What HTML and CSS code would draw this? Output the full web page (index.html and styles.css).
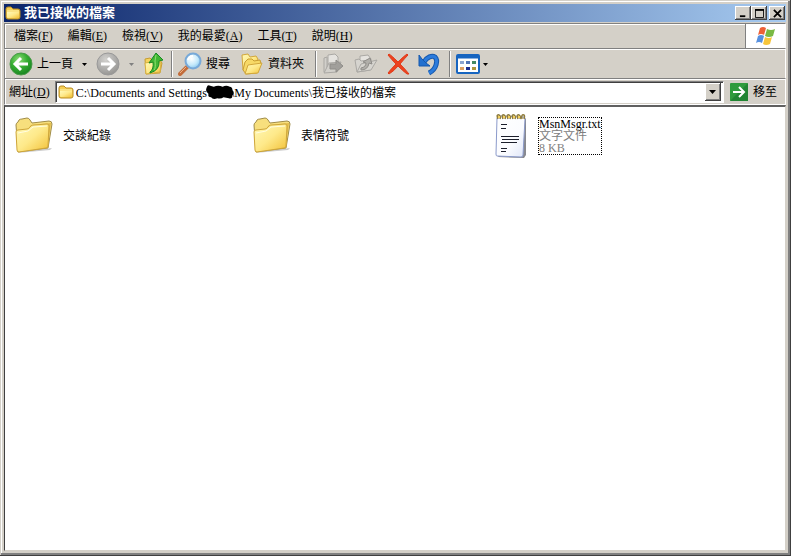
FILE: index.html
```html
<!DOCTYPE html>
<html lang="zh-Hant">
<head>
<meta charset="utf-8">
<title>我已接收的檔案</title>
<link rel="stylesheet" href="styles.css">
</head>
<body>
<svg class="defs" aria-hidden="true">
  <defs>
    <linearGradient id="gold" x1="0" y1="0" x2="1" y2="1"><stop offset="0" stop-color="#fff9b8"/><stop offset=".5" stop-color="#fee98a"/><stop offset="1" stop-color="#f2c035"/></linearGradient>
    <radialGradient id="green" cx=".4" cy=".3" r=".75"><stop offset="0" stop-color="#8fdc78"/><stop offset=".5" stop-color="#35ad32"/><stop offset="1" stop-color="#158020"/></radialGradient>
    <radialGradient id="grey" cx=".4" cy=".3" r=".75"><stop offset="0" stop-color="#d2d1ce"/><stop offset=".6" stop-color="#adacaa"/><stop offset="1" stop-color="#93928f"/></radialGradient>
    <radialGradient id="lens" cx=".4" cy=".35" r=".7"><stop offset="0" stop-color="#fff"/><stop offset=".6" stop-color="#c4e9fb"/><stop offset="1" stop-color="#80c3ee"/></radialGradient>
    <linearGradient id="page" x1="0" y1="0" x2="1" y2="1"><stop offset="0" stop-color="#fff"/><stop offset=".6" stop-color="#fbfcff"/><stop offset="1" stop-color="#dfe6f8"/></linearGradient>
    <symbol id="folder" viewBox="0 0 40 40">
      <path d="M3 37 36 34 38 32 14 35Z" fill="#999" opacity=".5"/>
      <path d="M2 9Q2 7 4 6L5 4Q6 3 8 3L13 2Q15 2 16 4L18 7 35 5Q38 5 38 8L34 32 4 36Z" fill="#f7df7d" stroke="#a08c48"/>
      <path d="M5 15 13 14 17 9 37 7 34 31 5 35Z" fill="#e3bc4a"/>
      <path d="M2 16Q2 14 4 14L13 13Q15 13 16 11L17 10Q18 9 20 9L33 8Q35 8 35 10L34 30Q34 32 32 32L5 36Q3 36 3 34Z" fill="url(#gold)" stroke="#cfa63a"/>
      <path d="M4 17 14 15 19 11 33 10" fill="none" stroke="#fffde0"/>
    </symbol>
    <symbol id="small-folder" viewBox="0 0 16 14">
      <path d="M1 3Q1 1 3 1H6L8 3H13Q15 3 15 5V11Q15 13 13 13H3Q1 13 1 11Z" fill="#f6cf54" stroke="#b98c22"/>
      <path d="M2 6H14V11Q14 12 13 12H3Q2 12 2 11Z" fill="url(#gold)"/>
      <path d="M2 5H14" stroke="#fff7b5"/>
    </symbol>
  </defs>
</svg>
<main class="window">
  <header class="titlebar">
    <svg class="small-icon"><use href="#small-folder"/></svg>
    <h1>我已接收的檔案</h1>
    <div class="caption-buttons">
      <button aria-label="最小化"><svg viewBox="0 0 10 10"><path d="M1 8H7" stroke="#000" stroke-width="2"/></svg></button>
      <button aria-label="最大化"><svg viewBox="0 0 10 10"><path d="M.5 1V9.5H9.5V1M0 1H10" fill="none" stroke="#000"/><path d="M0 1H10" stroke="#000" stroke-width="2"/></svg></button>
      <button class="close" aria-label="關閉"><svg viewBox="0 0 10 10"><path d="M1 1 9 9M9 1 1 9" stroke="#000" stroke-width="2"/></svg></button>
    </div>
  </header>

  <nav class="menubar" aria-label="功能表">
    <div class="menus">
      <button>檔案(<u>F</u>)</button>
      <button>編輯(<u>E</u>)</button>
      <button>檢視(<u>V</u>)</button>
      <button>我的最愛(<u>A</u>)</button>
      <button>工具(<u>T</u>)</button>
      <button>說明(<u>H</u>)</button>
    </div>
    <div class="brand">
      <svg viewBox="0 0 20 20" aria-hidden="true">
        <path d="M4 2Q7 0 10 2L8 9Q5 7 2 9Z" fill="#ed6137"/>
        <path d="M11 3Q15 5 19 3L17 10Q13 12 9 10Z" fill="#79b943"/>
        <path d="M2 10Q5 8 8 10L6 17Q3 15 0 17Z" fill="#5790df"/>
        <path d="M9 11Q13 13 16 11L14 18Q10 20 7 18Z" fill="#f7c53b"/>
      </svg>
    </div>
  </nav>

  <div class="toolbar" role="toolbar" aria-label="標準按鈕">
    <button class="tool back">
      <svg viewBox="0 0 24 24"><circle cx="12" cy="12" r="11" fill="url(#green)" stroke="#4a9a49"/><path d="M19 12H7M12 6 6 12 12 18" fill="none" stroke="#fff" stroke-width="3"/></svg>
      <span>上一頁</span>
    </button>
    <button class="drop" aria-label="上一頁清單"><svg viewBox="0 0 5 3"><path d="M0 0H5L2.500 3Z"/></svg></button>
    <button class="tool forward" aria-label="下一頁">
      <svg viewBox="0 0 24 24"><circle cx="12" cy="12" r="11" fill="url(#grey)" stroke="#999"/><path d="M5 12H17M12 6 18 12 12 18" fill="none" stroke="#fff" stroke-width="3"/></svg>
    </button>
    <button class="drop dim" aria-label="下一頁清單"><svg viewBox="0 0 5 3"><path d="M0 0H5L2.500 3Z"/></svg></button>
    <button class="tool up" aria-label="上一層">
      <svg viewBox="0 0 22 24"><path d="M2 7 7 6 9 8 17 8 19 11 17 21 3 22Z" fill="#f5d45e" stroke="#c79d31"/><path d="M2 11 8 10 18 11 17 20 3 22Z" fill="url(#gold)" stroke="#d7af40"/><path d="M7 20Q11 17 10 10L6 11 13 1 20 8 16 9Q17 18 7 21Z" fill="#41b634" stroke="#168a22"/><path d="M13 3 12 9Q13 16 11 18" stroke="#8ee06f" fill="none"/></svg>
    </button>
    <span class="divider"></span>
    <button class="tool search">
      <svg viewBox="0 0 24 24"><path d="M2 22 9 15" stroke="#c26d3c" stroke-width="4" stroke-linecap="round"/><path d="M2 21 8 15" stroke="#efb184" stroke-width="1"/><circle cx="15" cy="9" r="7.500" fill="url(#lens)" stroke="#78a9d8" stroke-width="2"/><path d="M10 8Q11 4 15 4" stroke="#fff" stroke-width="2" fill="none"/></svg>
      <span>搜尋</span>
    </button>
    <button class="tool folders">
      <svg viewBox="0 0 24 24"><path d="M2 3 8 2 10 5 16 4 18 7 15 17 3 18Z" fill="url(#gold)" stroke="#d2a73b"/><path d="M5 10 8 7 12 7 14 9 20 8 21 12 17 21 6 22 3 18Z" fill="#f7d966" stroke="#c99d31"/><path d="M8 13 22 11 18 21 5 22Z" fill="url(#gold)" stroke="#d2a73b"/></svg>
      <span>資料夾</span>
    </button>
    <span class="divider"></span>
    <button class="tool move" aria-label="移至">
      <svg viewBox="0 0 24 24" fill="#d2d0cb" stroke="#aaa8a4"><path d="M6 3 13 2 16 5V16L6 18Z" fill="#e5e3df"/><path d="M2 6 5 5V20L2 20Z"/><path d="M2 21 7 11 19 10 15 20Z"/><path d="M8 12H14V8L21 14 14 20V17H8Z" fill="#a19f9b" stroke="#8f8d89"/></svg>
    </button>
    <button class="tool copy" aria-label="複製到">
      <svg viewBox="0 0 24 24" fill="#d6d4cf" stroke="#aaa8a4"><path d="M6 4 14 3 17 7V17L6 18Z" fill="#e5e3df"/><path d="M1 8 5 7 7 9 15 8 16 18 3 20Z"/><path d="M3 20 7 12 23 8 17 18Z"/><path d="M7 16Q12 15 12 11L9 10 16 6 18 12 15 11Q14 18 7 18Z" fill="#b0aea9" stroke="#8f8d89"/></svg>
    </button>
    <button class="tool delete" aria-label="刪除">
      <svg viewBox="0 0 24 24"><path d="M3 2Q5 3 12 10Q18 4 21 2L22 3Q19 6 14 12Q19 17 23 22L21 22Q17 19 12 14Q8 19 3 22L2 21Q5 17 10 12Q6 8 2 3Z" fill="#ed421f" stroke="#e03c1a" stroke-width="1"/></svg>
    </button>
    <button class="tool undo" aria-label="復原">
      <svg viewBox="0 0 24 24"><path d="M7 10C10 5 15 3 18 5C21 8 20 17 12 21" fill="none" stroke="#1759ad" stroke-width="5"/><path d="M7 10C10 5 15 3 18 5C21 8 20 17 12 21" fill="none" stroke="#2b7bdc" stroke-width="3"/><path d="M2 3 2 14 13 14 9 11 5 7Z" fill="#2370cf" stroke="#1759ad"/></svg>
    </button>
    <span class="divider"></span>
    <button class="tool view" aria-label="檢視">
      <svg viewBox="0 0 24 20"><rect x="1" y="1" width="22" height="18" rx="1" fill="#fff" stroke="#1765c0" stroke-width="2"/><path d="M1 3H23" stroke="#1765c0" stroke-width="3"/><path d="M4 7H8V10H4Z" fill="#8ba4d0"/><path d="M10 7H14V10H10Z" fill="#5376b7"/><path d="M16 7H20V10H16Z" fill="#448a62"/><path d="M4 13H8V16H4Z" fill="#dda065"/><path d="M10 13H14V16H10Z" fill="#1b2d8e"/><path d="M16 13H20V16H16Z" fill="#ac963d"/></svg>
    </button>
    <button class="drop" aria-label="檢視清單"><svg viewBox="0 0 5 3"><path d="M0 0H5L2.500 3Z"/></svg></button>
  </div>

  <form class="addressbar">
    <label for="address">網址(<u>D</u>)</label>
    <div class="combo">
      <svg class="small-icon"><use href="#small-folder"/></svg>
      <div class="path">
        <input id="address" type="text" value="C:\Documents and Settings&nbsp;&nbsp;&nbsp;&nbsp;&nbsp;&nbsp;&nbsp;&nbsp;\My Documents\我已接收的檔案">
        <svg class="scribble" viewBox="0 0 34 18" aria-hidden="true"><path d="M2 4Q3 0 6 2L10 3Q15 1 20 3Q24 1 28 3Q31 3 31 7Q34 10 31 13Q31 17 27 16L21 15Q18 17 14 16Q9 18 7 15Q3 15 4 11Q0 8 2 4Z"/></svg>
      </div>
      <button type="button" class="combo-arrow" aria-label="位址清單"><svg viewBox="0 0 7 4"><path d="M0 0H7L3.500 4Z"/></svg></button>
    </div>
    <button type="button" class="go">
      <svg viewBox="0 0 18 18"><rect width="18" height="18" rx="1" fill="#2f9b3d"/><path d="M0 18 18 0V18Z" fill="#218533"/><path d="M3 9H14M9 4 14 9 9 14" fill="none" stroke="#fff" stroke-width="2"/></svg>
      <span>移至</span>
    </button>
  </form>

  <section class="content" aria-label="檔案">
    <ul class="files">
      <li><a href="#"><svg class="file-icon"><use href="#folder"/></svg><span class="file-name">交談紀錄</span></a></li>
      <li><a href="#"><svg class="file-icon"><use href="#folder"/></svg><span class="file-name">表情符號</span></a></li>
      <li><a href="#">
        <svg class="file-icon note" viewBox="0 0 34 46">
          <path d="M5 44 31 45 33 42 33 6 31 4Z" fill="#88898f"/>
          <path d="M6 3 31 4 32 6 30 42Q30 44 28 44L4 43Q3 43 3 41L4 5Z" fill="url(#page)" stroke="#8b9acb"/>
          <g shape-rendering="crispEdges" fill="#1c1f2c"><path d="M8 11H14V12H8ZM8 15H13V16H8ZM8 23H26V24H8ZM9 26H26V27H9ZM8 29H24V30H8ZM8 35H14V36H8ZM8 38H13V39H8Z"/></g>
          <g fill="none" stroke="#8f7c3c" stroke-width="1.500"><path d="M5 6Q3 1 6 2Q8 3 7 6M10 6Q8 1 11 2Q13 3 12 6M15 6Q13 1 16 2Q18 3 17 6M20 6Q18 1 21 2Q23 3 22 6M25 6Q23 1 26 2Q28 3 27 6M29 6Q28 1 31 2Q32 3 31 6"/></g>
          <path d="M5 4H7M10 4H12M15 4H17M20 4H22M25 4H27" stroke="#f3cf5c" stroke-width="2"/>
        </svg>
        <span class="file-name focused">MsnMsgr.txt<small>文字文件</small><small>8 KB</small></span>
      </a></li>
    </ul>
  </section>
</main>
</body>
</html>
```
FILE: styles.css
```css
* { box-sizing: border-box; }

body {
  margin: 0;
  background: #d4d0c8;
  color: #000;
  font: 12px/12px "Liberation Serif", "Noto Sans CJK TC", serif;
}

button, input {
  margin: 0;
  padding: 0;
  border: 0;
  background: none;
  color: inherit;
  font: inherit;
}

svg { display: block; flex: none; }
u { text-underline-offset: 1px; }
.defs { position: absolute; width: 0; height: 0; }

.window {
  display: flex;
  flex-direction: column;
  min-height: 100vh;
  padding: 4px 5px 5px 4px;
  box-shadow: inset -1px -1px #404040, inset 1px 1px #d4d0c8, inset -3px -3px #808080, inset 2px 2px #fff;
}

.titlebar {
  display: flex;
  align-items: center;
  gap: 3px;
  height: 18px;
  padding: 0 1px;
  background: linear-gradient(90deg, #0a246a, #a6caf0);
  color: #fff;
}
.titlebar h1 { flex: 1; margin: 0; font-size: 13px; line-height: 18px; }
.small-icon { width: 16px; height: 14px; }
.caption-buttons { display: flex; }
.caption-buttons button {
  display: grid;
  place-items: center;
  width: 16px;
  height: 14px;
  background: #d4d0c8;
  box-shadow: inset -1px -1px #404040, inset 1px 1px #fff, inset -2px -2px #808080;
}
.caption-buttons svg { width: 9px; height: 9px; }
.caption-buttons .close { margin-left: 2px; }

.menubar {
  display: flex;
  height: 26px;
  margin-top: 1px;
  border: 1px solid #808080;
  border-right-color: #fff;
  box-shadow: inset 1px 1px #fff;
}
.menus { display: flex; flex: 1; padding-left: 2px; }
.menus button { padding: 0 8px 0 7px; }
.brand {
  display: grid;
  place-items: center;
  width: 40px;
  border-left: 1px solid #808080;
  background: #fff;
}
.brand svg { width: 20px; height: 20px; }

.toolbar {
  display: flex;
  align-items: center;
  height: 30px;
  padding-left: 4px;
  border: 1px solid #808080;
  border-top-color: #fff;
  border-right-color: #fff;
  box-shadow: inset 1px 0 #fff;
}
.tool { display: flex; align-items: center; gap: 4px; }
.tool svg { width: 24px; height: 24px; }
.drop { display: grid; place-items: center; width: 23px; height: 24px; }
.drop svg { width: 5px; height: 3px; }
.dim { fill: #808080; }
.up { margin-right: 1px; }
.up svg { width: 22px; }
.divider {
  width: 2px;
  height: 26px;
  margin: 0 5px;
  border-left: 1px solid #808080;
  border-right: 1px solid #fff;
}
.folders { margin: 0 6px 0 10px; }
.move, .copy { margin-right: 8px; }
.delete { margin-right: 7px; }
.undo { margin-right: 3px; }
.view svg { height: 20px; }
.view + .drop { width: 10px; }

.addressbar {
  display: flex;
  align-items: center;
  height: 26px;
  padding: 0 8px 0 4px;
  border-left: 1px solid #808080;
  border-right: 1px solid #fff;
  border-bottom: 1px solid #fff;
  box-shadow: inset 1px 1px #fff;
}
.combo {
  display: flex;
  align-items: center;
  flex: 1;
  height: 22px;
  margin: 0 6px 0 5px;
  padding: 2px;
  border: 1px solid #808080;
  border-right-color: #fff;
  border-bottom-color: #fff;
  box-shadow: inset 1px 1px #404040;
  background: #fff;
}
.path { position: relative; flex: 1; margin-left: 2px; }
.path input { display: block; width: 100%; height: 16px; outline: 0; }
.scribble { position: absolute; left: 128px; top: 0; width: 32px; height: 16px; }
.combo-arrow {
  display: grid;
  place-items: center;
  width: 16px;
  height: 18px;
  background: #d4d0c8;
  box-shadow: inset -1px -1px #404040, inset 1px 1px #fff, inset -2px -2px #808080;
}
.combo-arrow svg { width: 7px; height: 4px; }
.go { display: flex; align-items: center; gap: 5px; }
.go svg { width: 18px; height: 18px; }

.content {
  flex: 1;
  border: 2px solid #404040;
  border-left: 1px solid #404040;
  border-top-color: #606060;
  border-right: 1px solid #d4d0c8;
  border-bottom: 1px solid #d4d0c8;
  background: #fff;
}
.files {
  display: grid;
  grid-template-columns: repeat(auto-fill, 238px);
  margin: 0;
  padding: 5px 0 0 5px;
  list-style: none;
}
.files a {
  display: flex;
  align-items: center;
  height: 48px;
  color: inherit;
  text-decoration: none;
}
.file-icon { width: 40px; height: 40px; margin: 0 4px; }
.note { width: 34px; height: 46px; margin: 0 8px 0 7px; }
.file-name { padding: 0 1px; margin-left: 3px; border: 1px solid transparent; }
.file-name small { display: block; color: #808080; font-size: 12px; }
.focused { border: 1px dotted #000; padding: 0; }
```
